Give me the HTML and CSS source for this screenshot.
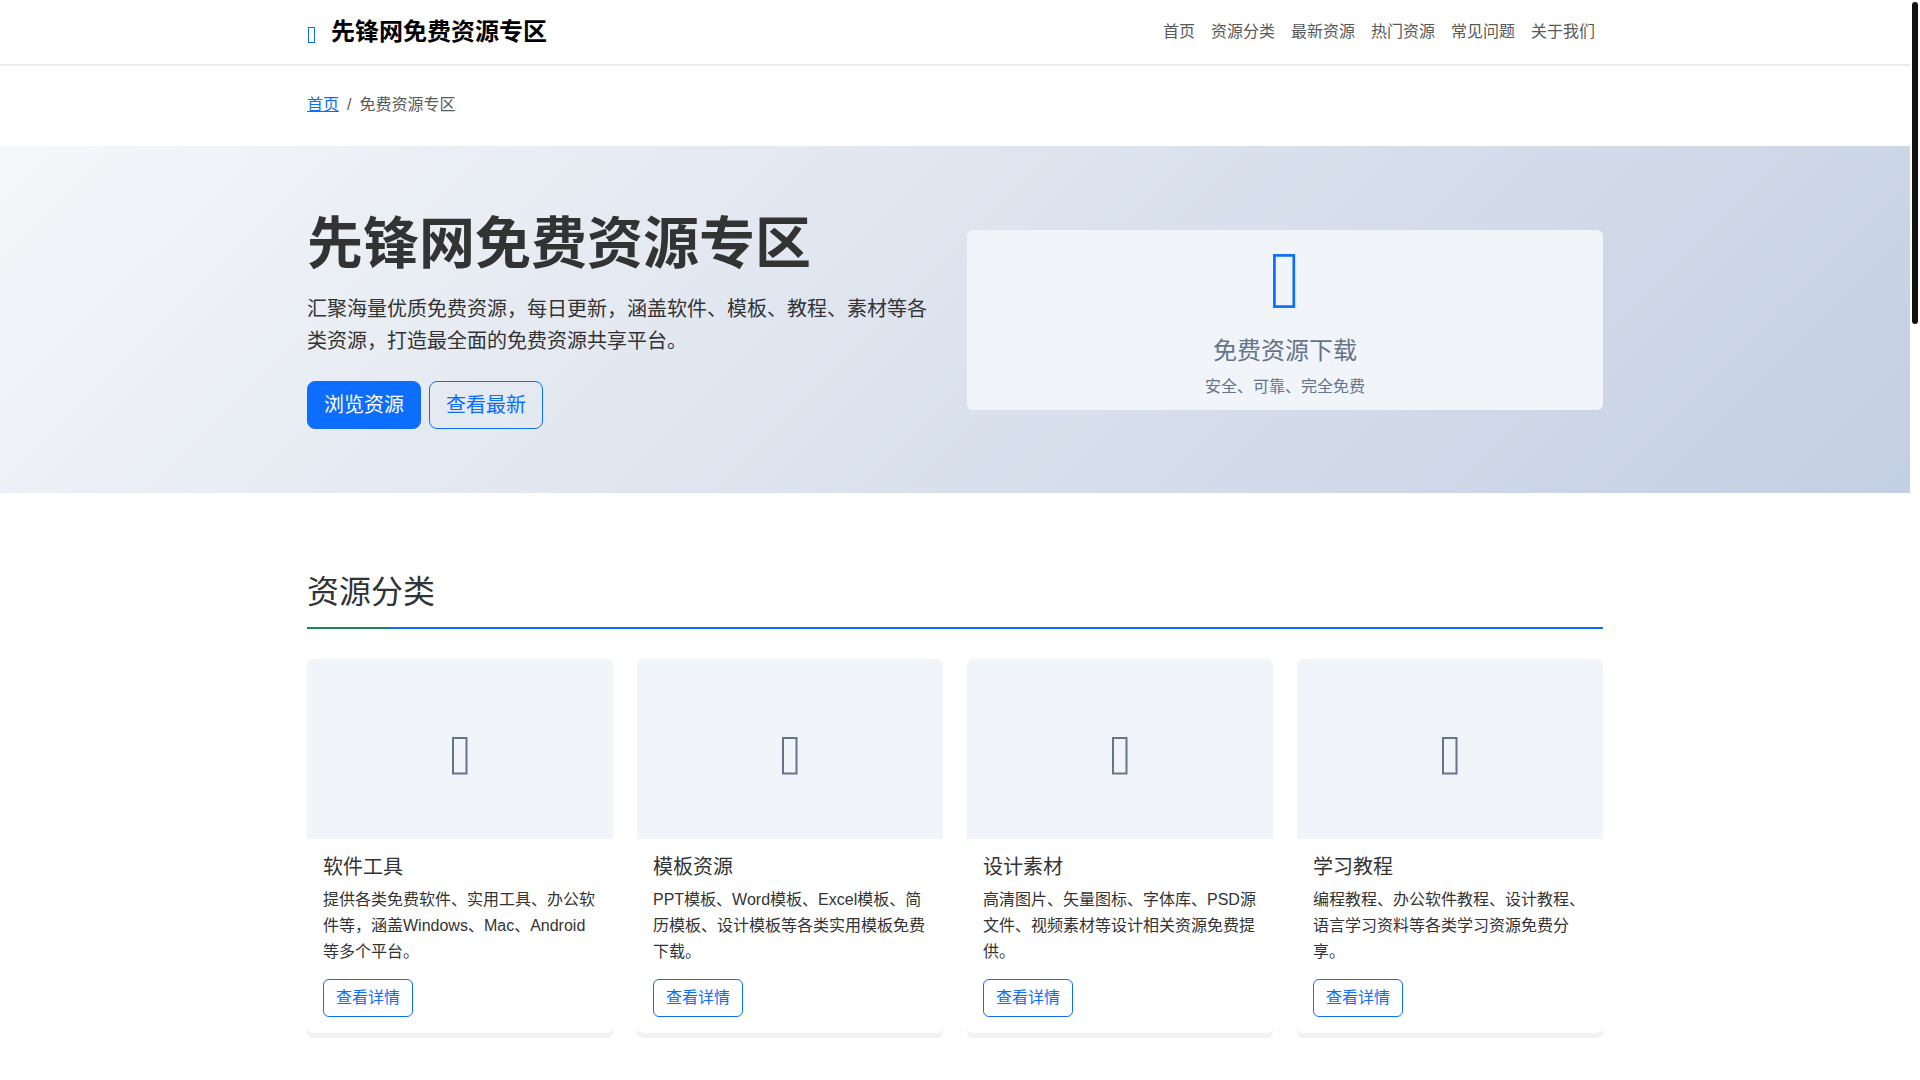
FILE: index.html
```html
<!DOCTYPE html>
<html lang="zh-CN">
<head>
    <meta charset="UTF-8">
    <meta name="viewport" content="width=device-width, initial-scale=1.0">
    <title>先锋网免费资源专区</title>
    <link rel="stylesheet" href="styles.css">
</head>
<body>
    <div class="page">
        <header class="navbar">
            <div class="container navbar-inner">
                <a class="brand" href="#">
                    <svg class="brand-icon" viewBox="0 0 8 18" aria-hidden="true"><rect x="1.5" y="0.5" width="6" height="15"/></svg>
                    <span>先锋网免费资源专区</span>
                </a>
                <nav class="nav">
                    <a href="#">首页</a>
                    <a href="#categories">资源分类</a>
                    <a href="#">最新资源</a>
                    <a href="#">热门资源</a>
                    <a href="#">常见问题</a>
                    <a href="#">关于我们</a>
                </nav>
            </div>
        </header>

        <nav class="container" aria-label="breadcrumb">
            <ol class="breadcrumb">
                <li><a href="#">首页</a></li>
                <li class="active">免费资源专区</li>
            </ol>
        </nav>

        <section class="hero">
            <div class="container hero-row">
                <div class="hero-text">
                    <h1>先锋网免费资源专区</h1>
                    <p class="lead">汇聚海量优质免费资源，每日更新，涵盖软件、模板、教程、素材等各类资源，打造最全面的免费资源共享平台。</p>
                    <div class="hero-buttons">
                        <a class="btn btn-lg btn-primary" href="#categories">浏览资源</a>
                        <a class="btn btn-lg btn-outline" href="#">查看最新</a>
                    </div>
                </div>
                <div class="hero-panel">
                    <svg class="panel-icon" viewBox="0 0 24 56" aria-hidden="true"><rect x="1.4" y="1.4" width="19.4" height="51.2"/></svg>
                    <h4>免费资源下载</h4>
                    <p>安全、可靠、完全免费</p>
                </div>
            </div>
        </section>

        <main class="container categories" id="categories">
            <h2 class="section-title">资源分类</h2>
            <div class="cards">
                <article class="card">
                    <div class="card-image"><svg class="card-icon" viewBox="0 0 16 38" aria-hidden="true"><rect x="1" y="1" width="13.5" height="35.5"/></svg></div>
                    <div class="card-body">
                        <h5>软件工具</h5>
                        <p>提供各类免费软件、实用工具、办公软件等，涵盖Windows、Mac、Android等多个平台。</p>
                        <a class="btn btn-outline" href="#">查看详情</a>
                    </div>
                </article>
                <article class="card">
                    <div class="card-image"><svg class="card-icon" viewBox="0 0 16 38" aria-hidden="true"><rect x="1" y="1" width="13.5" height="35.5"/></svg></div>
                    <div class="card-body">
                        <h5>模板资源</h5>
                        <p>PPT模板、Word模板、Excel模板、简历模板、设计模板等各类实用模板免费下载。</p>
                        <a class="btn btn-outline" href="#">查看详情</a>
                    </div>
                </article>
                <article class="card">
                    <div class="card-image"><svg class="card-icon" viewBox="0 0 16 38" aria-hidden="true"><rect x="1" y="1" width="13.5" height="35.5"/></svg></div>
                    <div class="card-body">
                        <h5>设计素材</h5>
                        <p>高清图片、矢量图标、字体库、PSD源文件、视频素材等设计相关资源免费提供。</p>
                        <a class="btn btn-outline" href="#">查看详情</a>
                    </div>
                </article>
                <article class="card">
                    <div class="card-image"><svg class="card-icon" viewBox="0 0 16 38" aria-hidden="true"><rect x="1" y="1" width="13.5" height="35.5"/></svg></div>
                    <div class="card-body">
                        <h5>学习教程</h5>
                        <p>编程教程、办公软件教程、设计教程、语言学习资料等各类学习资源免费分享。</p>
                        <a class="btn btn-outline" href="#">查看详情</a>
                    </div>
                </article>
            </div>
        </main>
    </div>
    <div class="scroll-thumb"></div>
</body>
</html>
```
FILE: styles.css
```css
* {
    box-sizing: border-box;
}

body {
    margin: 0;
    font-family: "Liberation Sans", "Noto Sans CJK SC", sans-serif;
    font-size: 16px;
    line-height: 26px;
    color: #333;
    background-color: #fff;
}

h1, h2, h4, h5, p {
    margin: 0;
}

.page {
    margin-right: 10px; /* Room for the scrollbar */
}

.container {
    width: 100%;
    max-width: 1320px;
    margin: 0 auto;
    padding: 0 12px;
}

/* Header */
.navbar {
    padding: 8px 0;
    border-bottom: 2px solid #ececec;
}

.navbar-inner {
    display: flex;
    align-items: center;
    justify-content: space-between;
    min-height: 48px;
}

.brand {
    display: flex;
    align-items: center;
    gap: 16px;
    font-size: 24px;
    font-weight: bold;
    line-height: 36px;
    color: #000;
    text-decoration: none;
}

.brand-icon {
    width: 8px;
    height: 18px;
    margin-top: 8px;
    fill: none;
    stroke: #0d6efd;
}

.nav {
    display: flex;
    gap: 16px;
    padding-right: 8px;
}

.nav a {
    color: #595959;
    text-decoration: none;
}

/* Breadcrumb */
.breadcrumb {
    display: flex;
    gap: 8px;
    margin: 0;
    padding: 26px 0 28px;
    list-style: none;
}

.breadcrumb a {
    color: #0d6efd;
}

.breadcrumb .active {
    color: #595959;
}

.breadcrumb .active::before {
    content: "/";
    padding-right: 8px;
}

/* Hero */
.hero {
    padding: 64px 0;
    background: linear-gradient(135deg, #f5f7fa 0%, #c3cfe2 100%);
}

.hero-row {
    display: grid;
    grid-template-columns: 1fr 1fr;
    gap: 24px;
    align-items: center;
}

.hero h1 {
    margin-bottom: 16px;
    font-size: 56px;
    font-weight: bold;
    line-height: 67px;
}

.lead {
    margin-bottom: 24px;
    font-size: 20px;
    line-height: 32px;
}

.hero-buttons {
    display: flex;
    gap: 8px;
}

.hero-panel {
    display: flex;
    flex-direction: column;
    align-items: center;
    height: 180px;
    padding-top: 24px;
    border-radius: 6px;
    background-color: #f1f5f9;
    color: #64748b;
}

.panel-icon {
    width: 24px;
    height: 56px;
    margin-bottom: 24px;
    fill: none;
    stroke: #0d6efd;
    stroke-width: 2.7;
}

.hero-panel h4 {
    margin-bottom: 6px;
    font-size: 24px;
    font-weight: normal;
    line-height: 34px;
}

/* Buttons */
.btn {
    display: inline-block;
    padding: 5px 12px;
    border: 1px solid #0d6efd;
    border-radius: 6px;
    text-decoration: none;
}

.btn-lg {
    padding: 8px 16px;
    border-radius: 8px;
    font-size: 20px;
    line-height: 30px;
}

.btn-primary {
    background-color: #0d6efd;
    color: #fff;
}

.btn-outline {
    color: #0d6efd;
}

/* Categories */
.categories {
    padding-top: 80px;
    padding-bottom: 48px;
}

.section-title {
    position: relative;
    margin-bottom: 30px;
    padding-bottom: 16px;
    border-bottom: 2px solid #0d6efd;
    font-size: 32px;
    font-weight: normal;
    line-height: 38px;
}

/* Green part at the start of the underline */
.section-title::after {
    content: "";
    position: absolute;
    left: 0;
    bottom: -2px;
    width: 80px;
    height: 2px;
    background-color: #198754;
}

.cards {
    display: grid;
    grid-template-columns: repeat(4, 1fr);
    gap: 24px;
}

.card {
    overflow: hidden;
    border-radius: 6px;
    background-color: #fff;
    box-shadow: 0 5px 0 #f2f2f2;
}

.card-image {
    display: flex;
    align-items: center;
    justify-content: center;
    height: 180px;
    padding-top: 14px;
    background-color: #f1f5f9;
}

.card-icon {
    width: 16px;
    height: 38px;
    fill: none;
    stroke: #64748b;
    stroke-width: 2;
}

.card-body {
    padding: 16px;
}

.card-body h5 {
    margin-bottom: 8px;
    font-size: 20px;
    font-weight: normal;
    line-height: 24px;
}

.card-body p {
    margin-bottom: 14px;
}

.scroll-thumb {
    position: fixed;
    top: 2px;
    right: 2px;
    width: 6px;
    height: 322px;
    border-radius: 3px;
    background-color: #111;
}
```
